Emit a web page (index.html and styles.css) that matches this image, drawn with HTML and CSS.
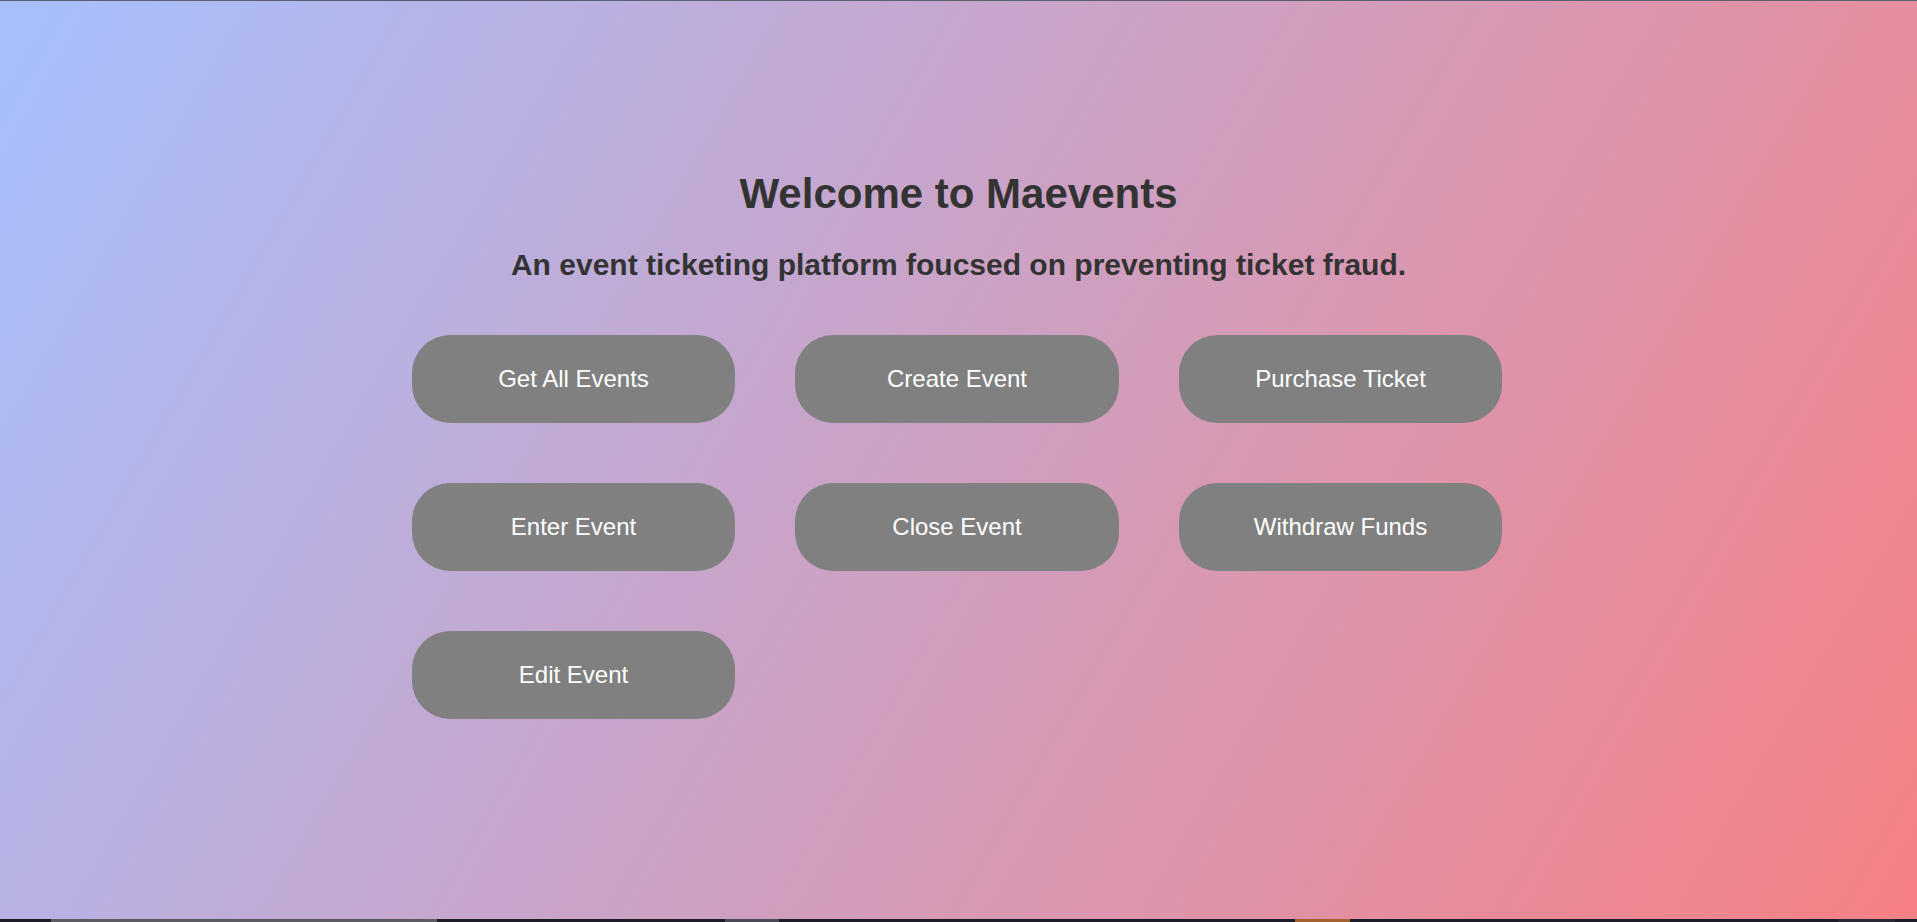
FILE: index.html
```html
<!DOCTYPE html>
<html lang="en">
<head>
<meta charset="utf-8">
<title>Maevents</title>
<link rel="stylesheet" href="styles.css">
</head>
<body>
<div class="topline"></div>
<main class="hero">
  <h1 class="title">Welcome to Maevents</h1>
  <h2 class="subtitle">An event ticketing platform foucsed on preventing ticket fraud.</h2>
  <div class="actions">
    <button class="action">Get All Events</button>
    <button class="action">Create Event</button>
    <button class="action">Purchase Ticket</button>
    <button class="action">Enter Event</button>
    <button class="action">Close Event</button>
    <button class="action">Withdraw Funds</button>
    <button class="action">Edit Event</button>
  </div>
</main>
<div class="taskstrip">
  <span class="seg seg-a"></span>
  <span class="seg seg-b"></span>
  <span class="seg seg-c"></span>
  <span class="seg seg-d"></span>
</div>
</body>
</html>
```
FILE: styles.css
```css
html, body {
  margin: 0;
  padding: 0;
  height: 100%;
}
body {
  display: flex;
  flex-direction: column;
  height: 922px;
  overflow: hidden;
  font-family: "Liberation Sans", Arial, sans-serif;
  background: linear-gradient(120deg, #a6c0fe 0%, #f68084 100%);
}
.topline {
  height: 1px;
  background: #5b6070;
  flex: none;
}
.hero {
  flex: 1;
  display: flex;
  flex-direction: column;
  align-items: center;
  padding-top: 169px;
}
.title {
  margin: 0;
  font-size: 42px;
  line-height: 48px;
  font-weight: bold;
  color: #333;
}
.subtitle {
  margin: 30px 0 0;
  font-size: 30px;
  line-height: 34px;
  font-weight: bold;
  color: #333;
}
.actions {
  margin: 53px 3px 0 0;
  display: grid;
  grid-template-columns: repeat(3, 323.5px);
  column-gap: 60px;
  row-gap: 60px;
}
.action {
  height: 88px;
  border: none;
  border-radius: 38px;
  background: #808080;
  color: #fff;
  font-family: "Liberation Sans", Arial, sans-serif;
  font-size: 24px;
  padding: 0;
  cursor: pointer;
}
.taskstrip {
  flex: none;
  height: 3px;
  background: #1d1d29;
  position: relative;
}
.seg {
  position: absolute;
  top: 0;
  height: 3px;
}
.seg-a { left: 51px; width: 386px; background: #5c5a62; }
.seg-b { left: 725px; width: 54px; background: #4a4a56; }
.seg-c { left: 1295px; width: 55px; background: #a5622e; }
.seg-d { left: 1838px; width: 57px; background: #2a2a36; }
```
